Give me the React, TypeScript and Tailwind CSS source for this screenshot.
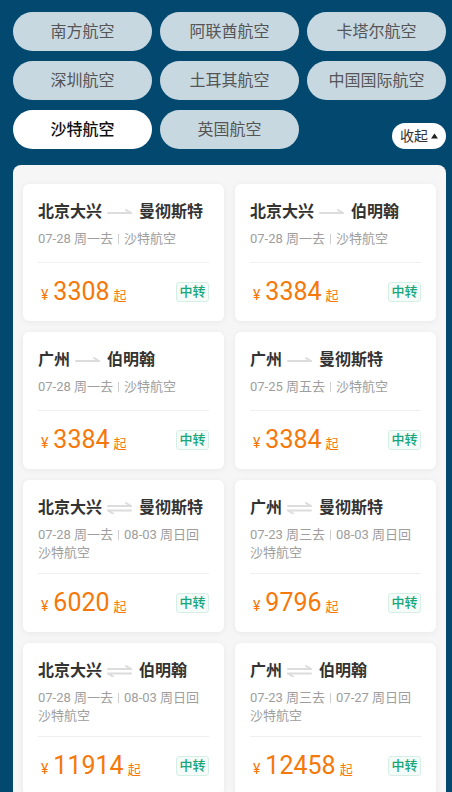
import React from "react";

type Route = {
  from: string;
  to: string;
  round: boolean;
  line1: string[];
  line2?: string;
  price: string;
};

const pills = [
  "南方航空",
  "阿联酋航空",
  "卡塔尔航空",
  "深圳航空",
  "土耳其航空",
  "中国国际航空",
  "沙特航空",
  "英国航空",
];

const routes: Route[] = [
  { from: "北京大兴", to: "曼彻斯特", round: false, line1: ["07-28 周一去", "沙特航空"], price: "3308" },
  { from: "北京大兴", to: "伯明翰", round: false, line1: ["07-28 周一去", "沙特航空"], price: "3384" },
  { from: "广州", to: "伯明翰", round: false, line1: ["07-28 周一去", "沙特航空"], price: "3384" },
  { from: "广州", to: "曼彻斯特", round: false, line1: ["07-25 周五去", "沙特航空"], price: "3384" },
  { from: "北京大兴", to: "曼彻斯特", round: true, line1: ["07-28 周一去", "08-03 周日回"], line2: "沙特航空", price: "6020" },
  { from: "广州", to: "曼彻斯特", round: true, line1: ["07-23 周三去", "08-03 周日回"], line2: "沙特航空", price: "9796" },
  { from: "北京大兴", to: "伯明翰", round: true, line1: ["07-28 周一去", "08-03 周日回"], line2: "沙特航空", price: "11914" },
  { from: "广州", to: "伯明翰", round: true, line1: ["07-23 周三去", "07-27 周日回"], line2: "沙特航空", price: "12458" },
];

function Arrow({ round }: { round: boolean }) {
  return (
    <svg width="25" height="12" viewBox="0 0 25 12" className="ml-[5px] mr-[7px] shrink-0">
      {round ? (
        <g stroke="#dcdcdc" strokeWidth="2" fill="none" strokeLinecap="round">
          <path d="M1 4 H24 L19 1" />
          <path d="M24 8.5 H1 L6 11.5" />
        </g>
      ) : (
        <g stroke="#dcdcdc" strokeWidth="2" fill="none" strokeLinecap="round">
          <path d="M1 7 H24 L19 4" />
        </g>
      )}
    </svg>
  );
}

function Card({ r }: { r: Route }) {
  return (
    <div className="rounded-[6px] bg-white px-[15px] pb-[15px] pt-[17px] shadow-[0_1px_6px_rgba(0,0,0,0.06)]">
      <div className="flex h-[22px] items-center text-[16px] font-bold leading-[22px] text-[#333]">
        <span>{r.from}</span>
        <Arrow round={r.round} />
        <span>{r.to}</span>
      </div>
      <div className="mt-[7px] text-[13px] leading-[18px] text-[#9e9e9e]">
        <div className="flex items-center whitespace-nowrap">
          <span>{r.line1[0]}</span>
          <span className="mx-[5px] inline-block h-[10px] w-px bg-[#cfcfcf]" />
          <span>{r.line1[1]}</span>
        </div>
        {r.line2 && <div>{r.line2}</div>}
      </div>
      <div className={r.round ? "mt-[11px] h-px bg-[#efefef]" : "mt-[14px] h-px bg-[#efefef]"} />
      <div className="mt-[15px] flex h-[28px] items-center justify-between">
        <div className="flex items-baseline text-[#f5780a]">
          <span className="ml-[3px] mr-[5px] text-[14px]">¥</span>
          <span className="text-[25px] leading-[28px]">{r.price}</span>
          <span className="ml-[4px] text-[13px]">起</span>
        </div>
        <span className="flex h-5 w-[33px] items-center justify-center rounded-[3px] border border-[#d6efe6] bg-[#f4fbf8] text-[13px] font-medium text-[#17a57a]">
          中转
        </span>
      </div>
    </div>
  );
}

export default function App() {
  return (
    <div
      className="h-[792px] overflow-hidden bg-[#02486f] pl-[13px] pr-[6px] pt-3"
      style={{ fontFamily: "Roboto, 'Noto Sans CJK SC', sans-serif" }}
    >
      <div className="grid grid-cols-3 gap-x-2 gap-y-[10px]">
        {pills.map((p) => {
          const active = p === "沙特航空";
          return (
            <div
              key={p}
              className={
                active
                  ? "flex h-[39px] items-center justify-center rounded-full bg-white text-[16px] font-medium text-[#111]"
                  : "flex h-[39px] items-center justify-center rounded-full bg-[#c8d8e1] text-[16px] text-[#555]"
              }
            >
              {p}
            </div>
          );
        })}
        <div className="flex items-end justify-end">
          <div className="flex h-[26px] w-[54px] items-center justify-center gap-[3px] rounded-full bg-white text-[14px] text-[#333]">
            <span>收起</span>
            <svg width="7" height="6" viewBox="0 0 7 6">
              <path d="M3.5 0.5 L7 5.5 H0 Z" fill="#222" />
            </svg>
          </div>
        </div>
      </div>
      <div className="mt-4 rounded-lg bg-[#f6f6f6] px-[10px] pb-3 pt-[19px]">
        <div className="grid grid-cols-2 gap-[11px]">
          {routes.map((r, i) => (
            <Card key={i} r={r} />
          ))}
        </div>
      </div>
    </div>
  );
}
